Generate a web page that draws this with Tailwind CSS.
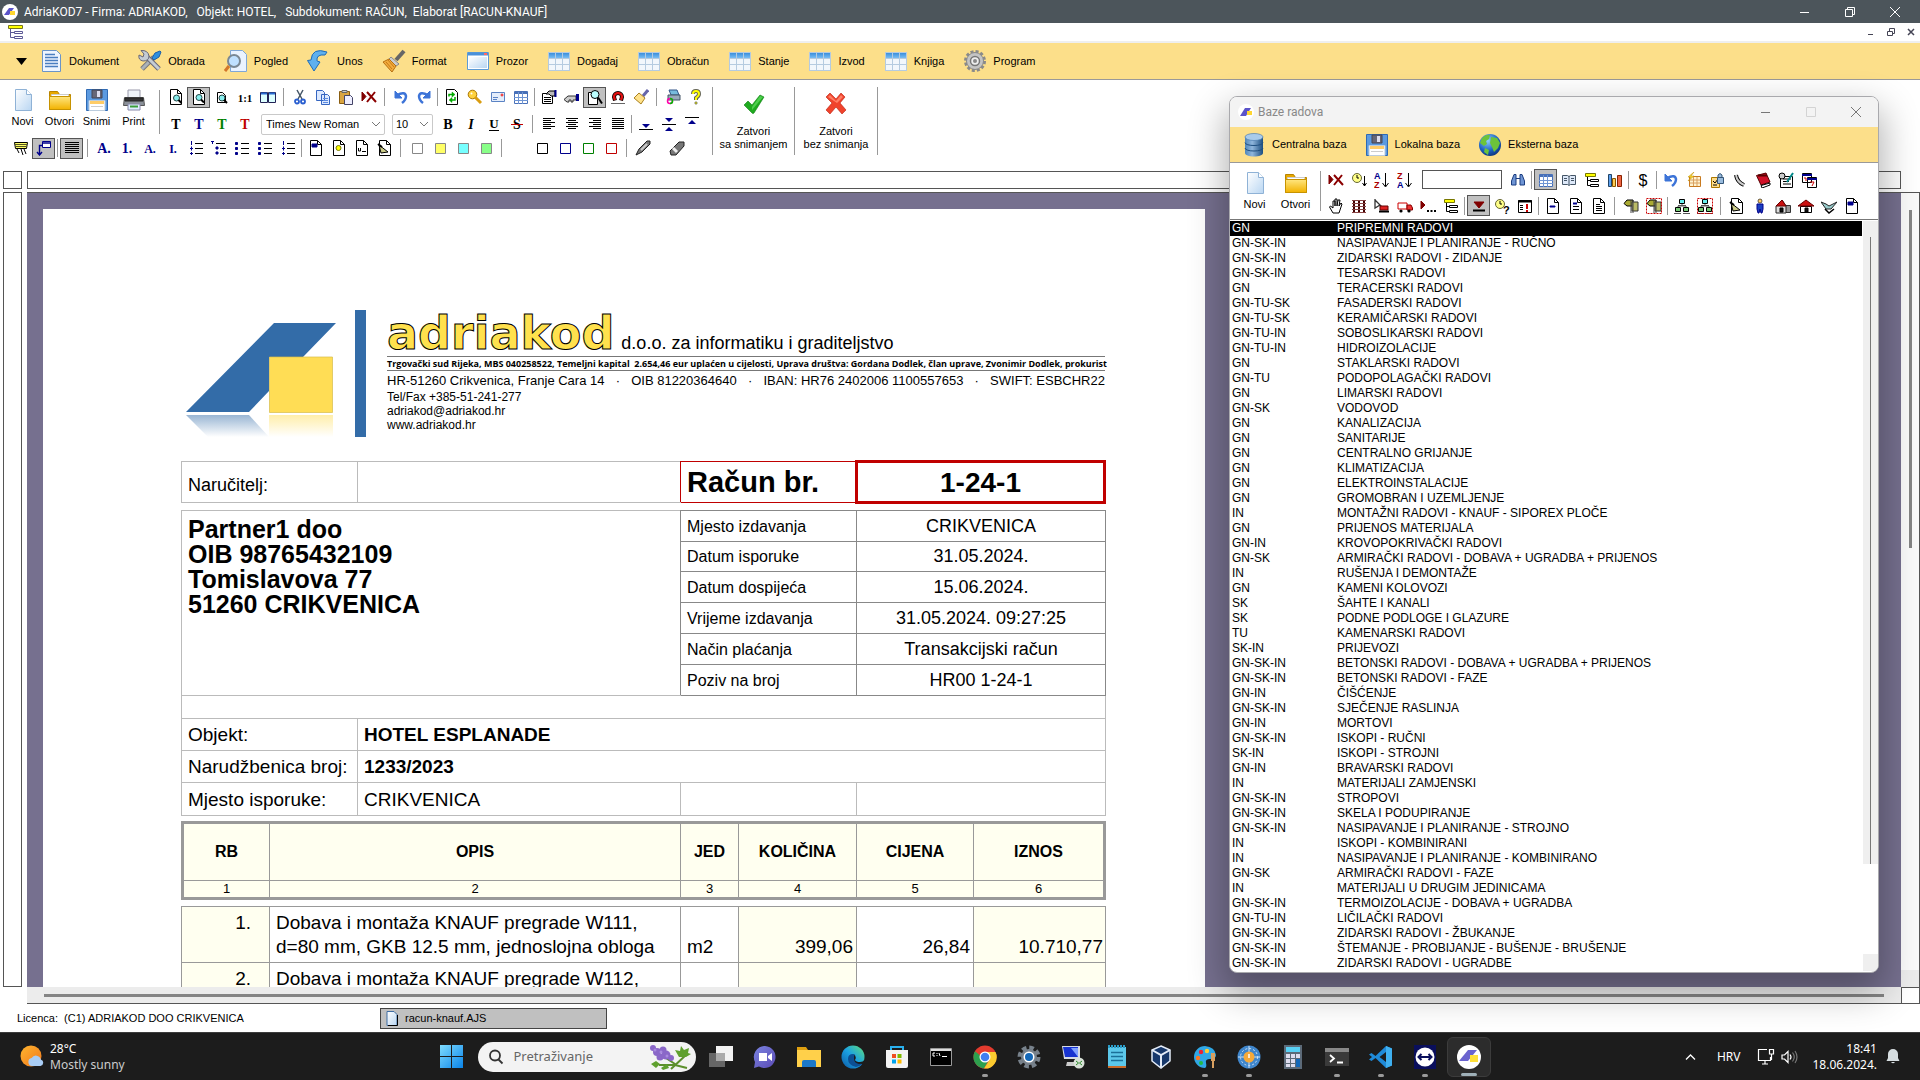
<!DOCTYPE html>
<html lang="hr">
<head>
<meta charset="utf-8">
<title>AdriaKOD7</title>
<script src="https://cdn.jsdelivr.net/npm/@tailwindcss/browser@4"></script>
</head>
<body class="h-screen overflow-hidden bg-white text-black font-['Liberation_Sans',Arial,sans-serif] text-[11px] leading-[13px]">

<svg class="absolute size-0" aria-hidden="true">
  <linearGradient id="gBlue" x1="0" y1="0" x2="1" y2="1"><stop offset="0" stop-color="#fff"/><stop offset="1" stop-color="#b9d6f2"/></linearGradient>
  <linearGradient id="gFolder" x1="0" y1="0" x2="0" y2="1"><stop offset="0" stop-color="#ffe680"/><stop offset="1" stop-color="#f2b200"/></linearGradient>
  <linearGradient id="gHead" x1="0" y1="0" x2="0" y2="1"><stop offset="0" stop-color="#3c8fdc"/><stop offset="1" stop-color="#79bdf2"/></linearGradient>
  <linearGradient id="gDb" x1="0" y1="0" x2="1" y2="0"><stop offset="0" stop-color="#4f86ba"/><stop offset=".4" stop-color="#8fb6dc"/><stop offset="1" stop-color="#1c4e80"/></linearGradient>
  <radialGradient id="gGlobe" cx=".4" cy=".3" r=".8"><stop offset="0" stop-color="#8fd0ff"/><stop offset=".6" stop-color="#1b5fbf"/><stop offset="1" stop-color="#0a2a6b"/></radialGradient>
  <linearGradient id="gRefB" x1="0" y1="0" x2="0" y2="1"><stop offset="0" stop-color="#336ca8" stop-opacity=".5"/><stop offset="1" stop-color="#336ca8" stop-opacity="0"/></linearGradient>
  <linearGradient id="gRefY" x1="0" y1="0" x2="0" y2="1"><stop offset="0" stop-color="#ffdd55" stop-opacity=".5"/><stop offset="1" stop-color="#ffdd55" stop-opacity="0"/></linearGradient>
  <linearGradient id="gWin" x1="0" y1="0" x2="1" y2="1"><stop offset="0" stop-color="#7fdcff"/><stop offset="1" stop-color="#0a84e8"/></linearGradient>
  <linearGradient id="gEdge" x1="0" y1="1" x2="1" y2="0"><stop offset="0" stop-color="#0c59a4"/><stop offset=".5" stop-color="#1ba1e2"/><stop offset="1" stop-color="#5fe07a"/></linearGradient>
  <linearGradient id="gChat" x1="0" y1="0" x2="1" y2="1"><stop offset="0" stop-color="#7a83e0"/><stop offset="1" stop-color="#5b4bb5"/></linearGradient>
  <linearGradient id="gSun" x1="0" y1="0" x2="1" y2="1"><stop offset="0" stop-color="#ffb52e"/><stop offset="1" stop-color="#f0781e"/></linearGradient>
</svg>

<div class="flex h-full flex-col">

  <!-- Window title -->
  <header class="flex h-[23px] shrink-0 items-center bg-[#4c555b] pl-[2px] pr-[3px] font-[Roboto,'Noto_Sans',sans-serif] text-xs text-white">
    <svg class="mr-[6px] size-4" viewBox="0 0 16 16"><circle cx="8" cy="8" r="8" fill="#fff"/><path d="M2 11 7 4h5L7 11z" fill="#5b53c9"/><path d="M8 7h5v4H8z" fill="#ffd630"/></svg>
    <h1 class="grow whitespace-pre">AdriaKOD7 - Firma: ADRIAKOD,   Objekt: HOTEL,   Subdokument: RAČUN,  Elaborat [RACUN-KNAUF]</h1>
    <div class="flex items-center" data-wins></div>
  </header>
  <div class="flex h-5 shrink-0 items-center justify-between border-b-2 border-[#efefef] bg-white pl-2 pr-px">
    <svg class="h-4 w-4" viewBox="0 0 16 16" fill="none" stroke="#5d5a96"><path d="M.5 1.500h14v3H.5z" fill="#ff0" stroke="#77761c"/><path d="M2.500 5v8.500h4M2.500 8.500h4M6.500 7.500h8v2h-8zM6.500 12.500h8v2h-8z"/></svg>
    <div class="flex items-center gap-1 text-[#445]">
      <button aria-label="Smanji" class="size-4"><svg viewBox="0 0 16 16" fill="none" stroke="currentColor"><path d="M5 10.500h5"/></svg></button>
      <button aria-label="Vrati" class="size-4"><svg viewBox="0 0 16 16" fill="none" stroke="currentColor"><path d="M4.500 7.500h5v4h-5zM6.500 7V4.500h5v5H10"/></svg></button>
      <button aria-label="Zatvori" class="size-4"><svg viewBox="0 0 16 16" fill="none" stroke="currentColor" stroke-width="1.500"><path d="m5 5 6 6m0-6-6 6"/></svg></button>
    </div>
  </div>

  <!-- Main menu -->
  <nav class="flex h-[37px] shrink-0 items-center border-b border-[#999] bg-[#fcdf8a] pl-4">
    <button aria-label="Izbornik" class="mr-3"><svg class="h-[7px] w-[11px]" viewBox="0 0 11 7"><path d="M0 0h11L5.500 7z"/></svg></button>
    <div class="flex gap-[19px]" data-menu="page:Dokument tools:Obrada search:Pogled arrow:Unos brush:Format window:Prozor grid:Događaj grid:Obračun grid:Stanje grid:Izvod grid:Knjiga gear:Program"></div>
  </nav>

  <!-- Toolbars -->
  <section class="flex h-[91px] shrink-0 pt-[7px]">
    <div class="shrink-0">
      <div class="flex pl-1">
        <div class="flex pt-px" data-big="page2:Novi folder:Otvori floppy:Snimi printer:Print"></div>
        <div class="ml-[7px] mr-1 h-11 w-px self-center bg-[#999]"></div>
        <div>
          <div class="flex h-5 items-center" data-bar="zoomDoc *zoomDoc2 zoomDoc3 oneone panes |4 cut copy paste del |4 undo redo |2 refresh key mail cells |2 props hand *magDoc magnet broom |4 printc help"></div>
          <div class="mt-1 flex h-[26px] items-center">
            <div class="flex" data-bar="T#000 T#00008b T#008000 T#c00000"></div>
            <span class="relative ml-[5px] flex">
              <select aria-label="Font" class="h-[21px] w-[124px] appearance-none rounded-xs border border-[#c9c9c9] bg-white pl-1 text-[11px]"><option>Times New Roman</option></select>
              <svg class="pointer-events-none absolute right-1 top-[7px] h-[6px] w-[10px]" viewBox="0 0 10 6" fill="none" stroke="#777"><path d="m1 1 4 4 4-4"/></svg>
            </span>
            <span class="relative ml-[7px] mr-[3px] flex">
              <select aria-label="Veličina" class="h-[21px] w-[41px] appearance-none rounded-xs border border-[#c9c9c9] bg-white pl-[3px] text-[11px]"><option>10</option></select>
              <svg class="pointer-events-none absolute right-1 top-[7px] h-[6px] w-[10px]" viewBox="0 0 10 6" fill="none" stroke="#777"><path d="m1 1 4 4 4-4"/></svg>
            </span>
            <div class="flex items-center" data-bar="bold italic underl strike |4 alL alC alR alJ |2 vB vM vT"></div>
          </div>
        </div>
      </div>
      <div class="mt-px flex h-5 items-center pl-[9px]" data-bar="sheet *frame |2 *justify |4 nA n1 na nI num multi bul bul num |2 docB docS docT docP |4 sq#888#fff sq#888#ff6 sq#888#7ff sq#888#8f8 |4 _24 sq#000#fff sq#00008b#fff sq#008000#fff sq#c00000#fff |4 pen _11 pen2"></div>
    </div>
    <div class="ml-[5px] flex h-[68px] items-stretch divide-x divide-[#999] border-x border-[#999]">
      <button class="flex w-[82px] flex-col items-center pt-1 text-center"><svg class="mb-[10px] size-6" viewBox="0 0 24 24"><path d="m2 14 4-4 4 4 8-10 4 2-10 16q-1 1-2 0z" fill="#1faa1f" stroke="#0f7d12" stroke-width=".6"/><path d="m10 16 8-11 3 1-11 13z" fill="#4fcf4f"/></svg>Zatvori<br>sa snimanjem</button>
      <button class="flex w-[82px] flex-col items-center pt-1 text-center"><svg class="mb-[10px] size-6" viewBox="0 0 24 24"><path d="m2 6 4-4 6 6 5-6 4 4-5 6 6 7-4 4-6-7-6 7-4-4 6-7z" fill="#f0432c" stroke="#b8200f" stroke-width=".6"/><path d="m4 6 2-2 6 6 5-6 2 2-6 6z" fill="#ff7f66"/></svg>Zatvori<br>bez snimanja</button>
    </div>
  </section>

  <!-- Horizontal ruler -->
  <div class="flex h-[18px] shrink-0 gap-[5px] pl-[3px] pr-[19px]">
    <div class="w-[19px] border border-[#555]"></div>
    <div class="grow border border-[#555]"></div>
  </div>

  <!-- Work area -->
  <main class="mt-[3px] flex min-h-0 grow gap-[5px] pl-[3px]">
    <div class="mb-[17px] w-[19px] border border-[#555]"></div>
    <div class="flex min-w-0 grow flex-col border-y border-r border-[#555]">
      <div class="flex min-h-0 grow">
        <div class="min-w-0 grow overflow-hidden bg-[#76708f] pl-4 pt-4">
          <article class="h-full w-[1162px] bg-white pl-[138px] pt-[101px]">
            <div class="w-[925px]">
              <!-- Letterhead -->
              <header class="flex h-[150px] pl-[5px]">
                <svg class="h-[130px] w-[181px] shrink-0" viewBox="0 0 181 130">
                  <path d="M0 102 88 13h62l-33 34H83v34l-20 21z" fill="#336ca8"/>
                  <path d="M83.500 47h63v55.500h-63z" fill="#ffdd55" stroke="#d6bb4c" stroke-width=".7"/>
                  <path d="M0 105h63l20 22H22z" fill="url(#gRefB)"/><path d="M83 105h64v22H83z" fill="url(#gRefY)"/>
                  <path d="M169 0h11v127h-11z" fill="#336ca8"/>
                </svg>
                <div class="ml-5 w-[718px] pt-px">
                  <div class="flex h-[45px] items-baseline justify-start gap-[7px]">
                    <strong class="font-['DejaVu_Sans',sans-serif] text-[46px] font-bold leading-[45px] text-[#ffe14d] [-webkit-text-stroke:1px_#000]">adriakod</strong>
                    <span class="whitespace-nowrap text-[18px]">d.o.o. za informatiku i graditeljstvo</span>
                  </div>
                  <p class="h-[15px] whitespace-nowrap border-y border-[#777] font-['Open_Sans',sans-serif] text-[9px] font-bold leading-[13px]">Trgovački sud Rijeka, MBS 040258522, Temeljni kapital&nbsp; 2.654,46 eur uplaćen u cijelosti, Uprava društva: Gordana Dodlek, član uprave, Zvonimir Dodlek, prokurist</p>
                  <p class="flex justify-between whitespace-nowrap text-[13px] leading-[19px]"><span>HR-51260 Crikvenica, Franje Cara 14</span><span>·</span><span>OIB 81220364640</span><span>·</span><span>IBAN: HR76 2402006 1100557653</span><span>·</span><span>SWIFT: ESBCHR22</span></p>
                  <address class="text-xs leading-[14px] not-italic">Tel/Fax +385-51-241-277<br>adriakod@adriakod.hr<br>www.adriakod.hr</address>
                </div>
              </header>

              <table class="w-full table-fixed border-collapse border border-[#bbb] text-[19px]">
                <colgroup><col class="w-[176px]"><col><col class="w-[176px]"><col class="w-[248px]"></colgroup>
                <tr class="h-[41px]">
                  <td class="border border-[#bbb] pl-[6px] pt-[6px] text-[18px]">Naručitelj:</td><td class="border border-[#bbb] border-r-[#c00000]"></td>
                  <th class="border border-[#c00000] pl-[6px] text-left text-[29px]">Račun br.</th>
                  <th class="border-3 border-[#c00000] text-[28px]">1-24-1</th>
                </tr>
              </table>

              <table class="mt-[6px] w-full table-fixed border-collapse border border-[#bbb] text-[19px]">
                <colgroup><col class="w-[176px]"><col><col class="w-[176px]"><col class="w-[249px]"></colgroup>
                <tr class="h-[31px]">
                  <td colspan="2" rowspan="6" class="border border-[#bbb] border-r-[#888] pl-[6px] pt-[6px] align-top text-[25px] font-bold leading-[25px]">Partner1 doo<br>OIB 98765432109<br>Tomislavova 77<br>51260 CRIKVENICA</td>
                  <td class="border border-[#888] pl-[6px] text-[16px]">Mjesto izdavanja</td><td class="border border-[#888] text-center text-[18px]">CRIKVENICA</td>
                </tr>
                <tr class="h-[30px]"><td class="border border-[#888] pl-[6px] text-[16px]">Datum isporuke</td><td class="border border-[#888] text-center text-[18px]">31.05.2024.</td></tr>
                <tr class="h-[31px]"><td class="border border-[#888] pl-[6px] text-[16px]">Datum dospijeća</td><td class="border border-[#888] text-center text-[18px]">15.06.2024.</td></tr>
                <tr class="h-[31px]"><td class="border border-[#888] pl-[6px] text-[16px]">Vrijeme izdavanja</td><td class="border border-[#888] text-center text-[18px]">31.05.2024. 09:27:25</td></tr>
                <tr class="h-[31px]"><td class="border border-[#888] pl-[6px] text-[16px]">Način plaćanja</td><td class="border border-[#888] text-center text-[18px]">Transakcijski račun</td></tr>
                <tr class="h-[31px]"><td class="border border-[#888] pl-[6px] text-[16px]">Poziv na broj</td><td class="border border-[#888] text-center text-[18px]">HR00 1-24-1</td></tr>
                <tr class="h-[23px]"><td colspan="4" class="border border-[#bbb]"></td></tr>
                <tr class="h-8"><td class="border border-[#bbb] pl-[6px]">Objekt:</td><th colspan="3" class="border border-[#bbb] pl-[6px] text-left">HOTEL ESPLANADE</th></tr>
                <tr class="h-8"><td class="whitespace-nowrap border border-[#bbb] pl-[6px]">Narudžbenica broj:</td><th colspan="3" class="border border-[#bbb] pl-[6px] text-left">1233/2023</th></tr>
                <tr class="h-[33px]"><td class="border border-[#bbb] pl-[6px]">Mjesto isporuke:</td><td class="border border-[#bbb] pl-[6px]">CRIKVENICA</td><td class="border border-[#bbb]"></td><td class="border border-[#bbb]"></td></tr>
              </table>

              <table class="mt-[5px] w-full table-fixed border-collapse border-3 border-[#999] bg-[#fffff0] text-[16px]">
                <colgroup><col class="w-[87px]"><col><col class="w-[58px]"><col class="w-[118px]"><col class="w-[117px]"><col class="w-[131px]"></colgroup>
                <tr class="h-[58px]"><th class="border border-[#999] pb-[2px]">RB</th><th class="border border-[#999] pb-[2px]">OPIS</th><th class="border border-[#999] pb-[2px]">JED</th><th class="border border-[#999] pb-[2px]">KOLIČINA</th><th class="border border-[#999] pb-[2px]">CIJENA</th><th class="border border-[#999] pb-[2px]">IZNOS</th></tr>
                <tr class="h-[18px] text-center text-[13px] leading-4"><td class="border border-[#999]">1</td><td class="border border-[#999]">2</td><td class="border border-[#999]">3</td><td class="border border-[#999]">4</td><td class="border border-[#999]">5</td><td class="border border-[#999]">6</td></tr>
              </table>

              <table class="mt-[6px] w-full table-fixed border-collapse border border-[#999] text-[19px] leading-6">
                <colgroup><col class="w-[88px]"><col><col class="w-[58px]"><col class="w-[118px]"><col class="w-[117px]"><col class="w-[132px]"></colgroup>
                <tr class="h-14 align-bottom">
                  <td class="border border-[#999] bg-[#fffff0] pr-[18px] pt-1 text-right align-top">1.</td>
                  <td class="whitespace-nowrap border border-[#999] pb-[3px] pl-[6px]">Dobava i montaža KNAUF pregrade W111,<br>d=80 mm, GKB 12.5 mm, jednoslojna obloga</td>
                  <td class="border border-[#999] pb-[3px] pl-[6px]">m2</td>
                  <td class="border border-[#999] bg-[#fffff0] pb-[3px] pr-[3px] text-right">399,06</td>
                  <td class="border border-[#999] pb-[3px] pr-[3px] text-right">26,84</td>
                  <td class="border border-[#999] bg-[#fffff0] pb-[3px] pr-[2px] text-right">10.710,77</td>
                </tr>
                <tr class="h-14 align-top">
                  <td class="border border-[#999] bg-[#fffff0] pr-[18px] pt-1 text-right">2.</td>
                  <td class="border border-[#999] pl-[6px] pt-1">Dobava i montaža KNAUF pregrade W112,</td>
                  <td class="border border-[#999]"></td><td class="border border-[#999] bg-[#fffff0]"></td><td class="border border-[#999]"></td><td class="border border-[#999] bg-[#fffff0]"></td>
                </tr>
              </table>
            </div>
          </article>
        </div>
        <div class="flex w-[18px] shrink-0 flex-col items-center bg-[#fafafa]">
          <div class="mt-[17px] h-[338px] w-[3px] bg-[#858585]"></div>
          <div class="mt-auto h-[17px] w-full bg-[#ececec]"></div>
        </div>
      </div>
      <div class="flex h-4 shrink-0">
        <div class="flex grow items-center bg-[#ececec] pl-[17px] pr-[17px]"><div class="h-[3px] grow bg-[#858585]"></div></div>
        <div class="w-[18px] border-l border-t border-[#555] bg-white"></div>
      </div>
    </div>
  </main>

  <!-- Status line -->
  <footer class="flex h-[28px] shrink-0 items-center pl-[17px]">
    <p class="w-[363px]">Licenca:&nbsp; (C1) ADRIAKOD DOO CRIKVENICA</p>
    <button class="flex h-[21px] w-[227px] items-center gap-[7px] border border-[#444] bg-[#c0c0c0] pl-[5px]"><svg class="h-[15px] w-3" viewBox="0 0 12 15"><path d="M1 .5h7l3 3v11H1z" fill="url(#gBlue)" stroke="#3f6ea5"/><path d="M11.500 4v10.500H2" fill="none" stroke="#000"/></svg>racun-knauf.AJS</button>
  </footer>

  <!-- System taskbar -->
  <footer class="grid h-12 shrink-0 grid-cols-[1fr_auto_1fr] items-center border-t border-[#3c3c3c] bg-[#1c1c1c] font-['Noto_Sans','Open_Sans',sans-serif] text-xs text-white">
    <div class="flex items-center gap-[6px] pl-5">
      <svg class="size-6" viewBox="0 0 24 24"><circle cx="11" cy="11" r="10.500" fill="url(#gSun)"/><path d="M12 21a4 4 0 0 1-.4-7.900 5 5 0 0 1 9.200 1.300A3.400 3.400 0 0 1 20.500 21z" fill="#a9cdf5"/></svg>
      <p class="leading-4">28°C<br><span class="text-[#ccc]">Mostly sunny</span></p>
    </div>
    <div class="flex items-center">
      <button aria-label="Start" class="flex w-11 justify-center"><svg class="size-[23px]" viewBox="0 0 23 23"><path d="M0 0h11v11H0zM12 0h11v11H12zM0 12h11v11H0zM12 12h11v11H12z" fill="url(#gWin)"/></svg></button>
      <div class="ml-1 mr-[3px] flex h-[30px] w-[218px] items-center rounded-full bg-[#f3f3f3] pl-[10px]">
        <svg class="size-4" viewBox="0 0 16 16" fill="none" stroke="#333" stroke-width="1.800"><circle cx="7" cy="6.500" r="5"/><path d="m10.500 10.500 4 4"/></svg>
        <input type="text" aria-label="Pretraživanje" placeholder="Pretraživanje" class="ml-[10px] w-0 grow bg-transparent text-[13px] outline-none placeholder:text-[#666]">
        <svg class="mr-[5px] h-[26px] w-[42px]" viewBox="0 0 42 26"><path d="m14 12 12 8M22 25l16-15M10 21h16l12 3" stroke="#5c8f2c" stroke-width="2" fill="none"/><g fill="#8a67c8"><circle cx="4" cy="4" r="3"/><circle cx="8" cy="8" r="4"/><circle cx="14" cy="6" r="3.500"/><circle cx="11" cy="13" r="3.500"/><circle cx="17" cy="11" r="4.500"/><circle cx="22" cy="14" r="3"/></g><g fill="#a98ae0"><circle cx="6" cy="6" r="1.500"/><circle cx="12" cy="8" r="1.500"/><circle cx="18" cy="12" r="1.500"/></g><path d="m26 6 5 1 1-5 3 4 5-2-1 5 3 1-5 3-7 0zM2 20l5-3 4 3-4 4zM12 24l6-4 2 4-6 2z" fill="#5fa02e"/></svg>
      </div>
      <div class="flex" data-tasks></div>
    </div>
    <div class="flex items-center justify-end pr-5">
      <svg class="h-[6px] w-[11px]" viewBox="0 0 11 6" fill="none" stroke="#fff" stroke-width="1.300"><path d="m1 5.500 4.500-4.500L10 5.500"/></svg>
      <span class="ml-[21px]">HRV</span>
      <svg class="ml-[17px] h-[17px] w-[18px]" viewBox="0 0 18 17" fill="none" stroke="#fff" stroke-width="1.200"><path d="M10 1.500H1.500v11h12V9M5 16h6M8 13v3M12.500 1.500h4V6h-4zM14.500 6v6"/></svg>
      <svg class="ml-[6px] h-[14px] w-[17px]" viewBox="0 0 17 14" fill="none" stroke="#fff" stroke-width="1.200"><path d="M1 5v4h2.500L7 12.500v-11L3.500 5zM9 4.500q2 2.500 0 5"/><path d="M11.500 2.500q3.500 4.500 0 9M14 1q4 6 0 12" stroke="#777"/></svg>
      <p class="ml-[14px] text-right leading-4">18:41<br>18.06.2024.</p>
      <svg class="ml-[9px] h-[15px] w-[14px]" viewBox="0 0 14 15" fill="#d6dde0"><path d="M7 0a5 5 0 0 0-5 5v4l-1.500 3h13L12 9V5a5 5 0 0 0-5-5zM5 13h4q-2 2.500-4 0z"/></svg>
    </div>
  </footer>
</div>

<!-- Floating window -->
<section class="absolute right-[41px] top-24 flex w-[650px] flex-col overflow-hidden rounded-lg border border-[#a9a9ad] bg-white shadow-[0_16px_36px_4px_rgba(0,0,0,0.3)]">
  <header class="flex h-[30px] items-center bg-[#f3f3f3] pl-2 font-[Roboto,'Noto_Sans',sans-serif] text-xs text-[#888]">
    <svg class="mr-1 size-4" viewBox="0 0 16 16"><circle cx="8" cy="8" r="8" fill="#fff"/><path d="M2 12 7 4h6L8 12z" fill="#5b53c9"/><path d="M9 7h5v4H9z" fill="#ffd630"/></svg>
    <h2 class="grow">Baze radova</h2>
    <div class="flex items-center text-[#777]" data-wins></div>
  </header>
  <nav class="flex h-9 items-center gap-[18px] border-b border-[#999] bg-[#fcdf8a] pl-3" data-menu="db:Centralna_baza floppy:Lokalna_baza globe:Eksterna_baza"></nav>
  <div class="flex h-[57px] border-b border-[#777] pl-1">
    <div class="flex pt-2 [&>button]:w-[41px]" data-big="page2:Novi folder:Otvori"></div>
    <div class="ml-1 mr-[3px] h-10 w-px self-center bg-[#999]"></div>
    <div class="pt-[5px]">
      <div class="flex h-[23px] items-center">
        <div class="flex items-center" data-bar="del clockS az za"></div>
        <input type="text" aria-label="Traži" class="ml-[6px] mr-1 h-[19px] w-20 border border-[#555] bg-white px-1">
        <div class="flex items-center" data-bar="binoc |2 *cells book tree chart |2 dollar |2 undo calY lock phone noteR calE calZ"></div>
      </div>
      <div class="mt-[3px] flex h-[23px] items-center" data-bar="palm crew digger truck dots tree |2 *downR clockQ alert |2 docC docM docL |4 sign signR |2 net netR |4 docP man house home shake docB"></div>
    </div>
  </div>
  <div class="flex pb-px pt-px">
    <div class="min-w-0 grow">
      <table class="w-full table-fixed text-left text-xs leading-[15px]">
        <colgroup><col class="w-[104px]"><col></colgroup>
        <tbody data-works></tbody>
      </table>
    </div>
    <div class="ml-px flex w-[15px] shrink-0 flex-col justify-between">
      <div class="flex h-[643px] justify-center bg-[#efefef] pt-4"><div class="w-px bg-[#777]"></div></div>
      <div class="h-[17px] bg-[#efefef]"></div>
    </div>
  </div>
</section>

<script>
const p = (d, f = 'none', s = '#000', w = 1) => `<path d="${d}" fill="${f}" stroke="${s}" stroke-width="${w}"/>`;
const tx = (t, f = '#000', a = '') => `<text x="8" y="13" text-anchor="middle" font-family="Liberation Serif" font-weight="bold" font-size="14" fill="${f}" ${a}>${t}</text>`;
const doc = p('M2.500 .5h7l4 4v11h-11z', '#fff') + p('M9.500 .5v4h4');
const lens = (x, y) => `<circle cx="${x}" cy="${y}" r="3" fill="#8ee" stroke="#244"/>` + p(`M${x + 2} ${y + 2}l3 3`, 'none', '#000', 2);
const lines = a => p(a.map((r, i) => `M${r[0]} ${2.5 + i * 2}h${r[1]}`).join(''));
const treeI = p('M1.500 1.500h10v3h-10z', '#ff0', '#770') + p('M3.500 5v8.500h3M3.500 8.500h3M6.500 7.500h8v2h-8zM6.500 12.500h8v2h-8z');
const listI = c => p('M7 3.500h8M7 8.500h8M7 13.500h8') + c;
const pcs = p('M5.500 1.500h5v4h-5z', '#6ee') + p('M1.500 9.500h5v4h-5zM9.500 9.500h5v4h-5z', '#7c7') + p('M8 6v2M4 9V8h8v1M0 15.500h7M9 15.500h7M4 7.500h8', 'none', '#555');
const signI = p('M1 5.500 4 2h6v6H4z', '#aa3') + p('M9 4h6v9H9z', '#bb6', '#333') + p('M8 2v13M10 2v13', 'none', '#444');
const I = {
  zoomDoc: doc + lens(8.5, 9), zoomDoc2: doc + lens(8, 8.5), zoomDoc3: p('M3.500 3.500h5l3 3v7h-8z', '#fff') + lens(8, 9),
  oneone: tx('1:1', '#000', 'style="font-size:11px"'),
  panes: p('M.5 3.500h7v10h-7zM8.500 3.500h7v10h-7z', '#dff', '#225') + p('M1 4.500h6M9 4.500h6', 'none', '#2a6ad0', 2),
  cut: p('m5 1 5 9M11 1 6 10', 'none', '#456', 1.5) + '<g fill="none" stroke="#2a5fd0" stroke-width="1.800"><circle cx="5" cy="12.500" r="2"/><circle cx="11" cy="12.500" r="2"/></g>',
  copy: p('M1.500 1.500h6l2 2v8h-8zM6.500 5.500h6l2 2v8h-8z', '#dce9ff', '#3565c0') + p('M8 9.500h5M8 11.500h5M8 13.500h5', 'none', '#5c8ae0'),
  paste: p('M1.500 2.500h10v12h-10z', '#d9a441', '#8a5d10') + p('M4 1.500h5v2H4z', '#ccc', '#666') + p('M6.500 6.500h6l2 2v7h-8z', '#eef', '#446'),
  del: p('M1 3v9l4-4.500z', '#800000', '#800000') + p('m6 3 9 10M14 3 6 13', 'none', '#8b0000', 2),
  undo: p('M4 6q8-4 9 1 0 4-4 7', 'none', '#3d74d8', 2.5) + p('M2 2v7h7z', '#3d74d8', '#3d74d8'),
  redo: p('M12 6Q4 2 3 7q0 4 4 7', 'none', '#3d74d8', 2.5) + p('M14 2v7H7z', '#3d74d8', '#3d74d8'),
  refresh: p('M2.500 .5h8l3 3v12h-11z', '#fff') + p('M5 7.500V5.500h3M11 8v3H8', 'none', '#0a0', 1.5) + p('m8 3 3 2.500L8 8zM8 8.500 5 11l3 2.500z', '#0a0', '#0a0', .5),
  key: '<circle cx="5.500" cy="5.500" r="4.300" fill="#ffd23c" stroke="#a87400"/><circle cx="4.500" cy="4.500" r="1" fill="#fff"/>' + p('m8 8 6 6M11 13l2-2', 'none', '#d99c10', 3),
  mail: p('M1.500 3.500h13v9h-13z', '#e4edfb', '#5b83c4') + p('M3 8.500h5M3 10.500h4', 'none', '#5b83c4') + p('M11 5h2v2h-2z', '#f66', '#d22', .5),
  cells: p('M1.500 2.500h13v12h-13z', '#fff', '#4870b8') + p('M1 4h14', 'none', '#4870b8', 2) + p('M1 8.500h14M1 11.500h14M5.500 3v12M9.500 3v12', 'none', '#6f95d4'),
  props: p('M1.500 4.500h10v10h-10z', '#fff') + p('M3 8.500h7M3 10.500h7M3 12.500h7') + p('M5 5 8 2h6v5h-4L8 5z', '#bbb') + p('M14.500 1v7', 'none', '#00008b', 2),
  hand: p('M0 10.500 4 7h8v4H9v2H7v-2H5v2H3z', '#ccc', '#333') + p('M13.500 5v7', 'none', '#00008b', 3),
  magDoc: p('M1.500 3.500h9v12h-9z', '#fff') + '<circle cx="8" cy="5.500" r="4" fill="#bff" stroke="#000"/>' + p('m11 8.500 4 6', 'none', '#000', 2),
  magnet: p('M5 11.500 4 8a4 4 0 1 1 8 0l-1 3.500', 'none', '#000', 4) + p('M5 11 4 8a4 4 0 1 1 8 0l-1 3', 'none', '#e01010', 2.4) + p('M1 14.500h14', 'none', '#666'),
  broom: p('m15 1-5 6', 'none', '#66a', 3) + p('m6 4 6 5-4 6-7-6z', '#ffe28a', '#a98020'),
  printc: p('M4 1h8l2 5H6z', '#7bd', '#358') + p('M3 6h12v5H3z', '#9ab', '#456') + '<circle cx="5" cy="12" r="2.500" fill="none" stroke="#f0a" stroke-width="1.500"/><path d="M5 9.500a2.500 2.500 0 0 1 0 5" fill="none" stroke="#0b0" stroke-width="1.500"/>',
  help: p('M5 5q0-3 3-3t3 3q0 2-3 4v2', 'none', '#665', 4) + p('M5 5q0-3 3-3t3 3q0 2-3 4v2', 'none', '#ff0', 2) + p('M7 13h2v2H7z', '#ff0', '#665', .7),
  bold: tx('B'), italic: tx('I', '#000', 'font-style="italic"'),
  underl: `<text x="8" y="12" text-anchor="middle" font-family="Liberation Serif" font-weight="bold" font-size="13">U</text>` + p('M3 14.500h10'),
  strike: tx('S') + p('M2 8.500h12', 'none', '#c00000'),
  alL: lines([[2, 12], [2, 8], [2, 12], [2, 8], [2, 12], [2, 8]]), alC: lines([[2, 12], [4, 8], [2, 12], [4, 8], [2, 12], [4, 8]]),
  alR: lines([[2, 12], [6, 8], [2, 12], [6, 8], [2, 12], [6, 8]]), alJ: lines([[2, 12], [2, 12], [2, 12], [2, 12], [2, 12], [2, 12]]),
  justify: lines([[1, 14], [1, 14], [1, 14], [1, 14], [1, 14], [1, 14]]),
  vB: p('M1 13.500h14') + p('M4 8h8l-4 4z', '#00008b', 'none'), vM: p('M1 8.500h14') + p('M4 2h8L8 6zM4 15h8l-4-4z', '#00008b', 'none'), vT: p('M1 1.500h14') + p('M4 8h8L8 4z', '#00008b', 'none'),
  sheet: p('M1.500 2.500h13l-1 6h-11z', '#ff6') + p('M2 4.500h12M2 6.500h12', 'none', '#552') + p('m4 9 2 4M8 9l2 6M11 9l2 5'),
  frame: p('M6.500 1.500h8v6h-8z', '#fff', '#00008b') + p('M7 3h7M6 5.500H3.500V15M1 12l2.500 3L6 12', 'none', '#00008b', 1.4),
  nA: tx('A.', '#00008b'), n1: tx('1.', '#00008b'), na: tx('A.', '#00008b', 'style="font-size:12px"'), nI: tx('I.', '#00008b', 'style="font-size:12px"'),
  num: listI(p('M3.500 1v4M2 8.500h3M2 13.500h3M3.500 6.500v4M3.500 12v3', 'none', '#00008b')),
  multi: p('M1.500 1v3M0 1.500h3', 'none', '#00008b') + p('M5 3.500h9M9 8.500h6M9 13.500h6') + p('M5 7h2v2H5zM5 12h2v2H5z', '#00008b', '#00008b'),
  bul: listI(p('M1.500 2.500h2v2h-2zM1.500 7.500h2v2h-2zM1.500 12.500h2v2h-2z', '#00008b', '#00008b')),
  docB: doc + p('M4 4h5v3H4z', '#00008b', '#00008b'), docS: doc + '<circle cx="7.500" cy="8" r="2.500" fill="#ff0" stroke="#770"/>',
  docT: doc + p('M4.500 8v3h2V8M8 11.500h4'), docP: doc + p('m2 5 9 7-7 1z', '#cc8') + p('m1 4 4 3', 'none', '#000', 2),
  docC: doc + p('M5 8h5v1H5z', '#00008b', '#00008b'), docM: doc + p('M5 5.500h4', 'none', '#00008b', 2) + p('M5 8.500h6M5 11.500h6'), docL: doc + p('M5 6.500h4M5 8.500h6M5 10.500h6M5 12.500h6'),
  pen: p('m1 15 3-6 8-8h3v3l-8 8z', '#777', '#222') + p('m6 10 6-6', 'none', '#ccc', 2), pen2: p('m1 11 9-9h5v4l-8 9H2z', '#777', '#222') + p('M4 8l4 4', 'none', '#eee', 3),
  clockS: '<circle cx="6" cy="6" r="4.500" fill="#ff8" stroke="#663"/>' + p('M6 3v3h2M13.500 4v10m-2-3 2 3 2-3'),
  az: '<g font-family="Liberation Sans" font-weight="bold" font-size="9"><text x="0" y="7" fill="#00008b">A</text><text x="0" y="16" fill="#a00">Z</text></g>' + p('M11.500 1v13m-3-3 3 4 3-4'),
  za: '<g font-family="Liberation Sans" font-weight="bold" font-size="9"><text x="0" y="7" fill="#a00">Z</text><text x="0" y="16" fill="#00008b">A</text></g>' + p('M11.500 1v13m-3-3 3 4 3-4'),
  binoc: p('M1.500 9 4 2.500h2V13H1.500zM14.500 9 12 2.500h-2V13h4.500zM6 6.500h4', '#6f95d4', '#1b3d80'),
  book: p('M1.500 3.500h5l1.500 1 1.500-1h5v9h-5l-1.500 1-1.500-1h-5z', '#dde8f8', '#456') + p('M8 4v9M3 6.500h3M3 8.500h3M10 6.500h3M10 8.500h3', 'none', '#456'),
  tree: treeI, chart: p('M1.500 2.500h3v12h-3z', '#5aa0f0', '#246') + p('M5.500 6.500h3v8h-3z', '#fc5', '#850') + p('M10.500 3.500h4v11h-4z', '#e64', '#820'),
  dollar: `<text x="8" y="14" text-anchor="middle" font-family="Liberation Sans" font-size="16">$</text>`,
  calY: p('M3.500 4.500h11v10h-11z', '#fff3d0', '#c87a20') + p('M4 8h10M4 11h10M7.500 5v9M11 5v9', 'none', '#d9a060') + p('m8 0-6 5h3L2 9l6-5H5z', '#fd3', '#b80', .5),
  lock: p('M2.500 5.500h8v10h-8z', '#fd8', '#a70') + p('m4 9 2 2 3-4M4 13h4') + p('M9 5V3q2-3 4 0v2M8.500 5.500h6v6h-6z', '#9bd', '#357'),
  phone: p('M4 3q1 7 8 10', 'none', '#000', 4) + p('M4 3q1 7 8 10', 'none', '#ccc', 2), noteR: p('M1.500 3.500 11 1l4 9-9 3z', '#d01028', '#500') + p('M6 13.500 15 11v2l-8 3z', '#fff') + p('M3 3.500h9', 'none', '#500', 2),
  calE: p('M2.500 4.500h12v11h-12z', '#fff') + p('M5 7h8M5 9.500h6M5 12h8') + '<circle cx="4" cy="4" r="3" fill="#ccc" stroke="#000"/>' + p('m15 1-6 9', 'none', '#088', 2),
  calZ: p('M1.500 1.500h9v9h-9zM6.500 5.500h9v10h-9z', '#fff') + p('M1 3h10M6 7h10', 'none', '#00008b', 2) + p('M9 10h4l-2 4M3 6h2v3', 'none', '#c00'),
  palm: p('M5 15 1.500 9l1-1L5 10V3h2v5V1h2v7l1-6h2l-1 6 2-3 1 1-3 9z', '#fff'),
  crew: p('M3 2v12M8 2v12M13 2v12', 'none', '#400', 2) + p('M1 2.500h14M1 5.500h14M1 8.500h14M1 11.500h14M1 14.500h14', 'none', '#844'),
  digger: p('M1 1v9l5-3M1 2l7 7', 'none', '#333', 1.3) + p('M6 8h8v4H6z', '#d22', '#600') + p('M5 13.500h10', 'none', '#000', 2),
  truck: p('M1 5h9v6H1z', '#fff', '#c00') + p('M10 7h4l1.500 3v2H10z', '#e33', '#800') + '<g><circle cx="4" cy="13" r="1.600"/><circle cx="12" cy="13" r="1.600"/></g>',
  dots: p('M1 3v8l4-4z', '#800000', '#800000') + p('M7 13h2M10.500 13h2M14 13h2', 'none', '#000', 2),
  downR: p('M3 4h10l-5 6z', '#800000', '#800000') + p('M2 12.500h12', 'none', '#000', 2), clockQ: '<circle cx="6" cy="6" r="4.500" fill="#ff8" stroke="#663"/>' + p('M6 3v3h2') + '<text x="9" y="16" font-family="Liberation Sans" font-weight="bold" font-size="11">?</text>',
  alert: p('M1.500 2.500h13v12h-13z', '#fff') + p('M1 3.500h14', 'none', '#000', 2) + p('M3 7.500h3M3 9.500h3M3 11.500h3') + p('M10 6v5M10 12v2', 'none', '#c00', 2),
  sign: signI, signR: signI + '<path d="M.5.500h15v15H.5z" fill="none" stroke="#c00" stroke-dasharray="2 1"/>', net: pcs, netR: pcs + '<path d="M.5.500h15v15H.5z" fill="none" stroke="#c00" stroke-dasharray="2 1"/>',
  man: '<circle cx="8" cy="3" r="2" fill="#fc6" stroke="#000" stroke-width=".6"/>' + p('M5 6h6v5l-1 4H9l-1-4-1 4H6l-1-4z', '#1a3fc0', '#00008b'),
  house: p('M4.500 7.500h11v7h-11z', '#999', '#333') + p('m1 8 6-6 4 6v7H1z', '#ddd', '#222') + p('M1 8l6-6 4 6z', '#c11', '#600') + p('M5 10h3v4H5z', '#111'), home: p('M2.500 8.500h11v6h-11z', '#fff') + p('m0 8 8-6 8 6z', '#c11', '#600') + p('M7 10h3v4H7z', '#111'),
  shake: p('M0 4l5 7h5l6-7-4 2-4 2-3-2z', '#9cc', '#222') + p('m4 11 4 4 5-4', 'none', '#000', 1.5)
};
const icon = n => n[0] === 'T' ? tx('T', n.slice(1)) :
  n.startsWith('sq') ? (([, s, f]) => `<path d="M3.500 3.500h10v10h-10z" fill="#${f}" stroke="#${s}"/>`)(n.split('#')) : I[n];
const seps = { 2: 'mx-0.5 h-[18px] w-px bg-[#999]', 4: 'mx-1 h-[18px] w-px bg-[#999]' };
const gaps = { 24: 'w-6', 11: 'w-[11px]' };
document.querySelectorAll('[data-bar]').forEach(el => el.innerHTML = el.dataset.bar.split(' ').map(n => {
  if (n[0] === '|') return `<i class="${seps[n.slice(1)]}"></i>`;
  if (n[0] === '_') return `<i class="${gaps[n.slice(1)]}"></i>`;
  const on = n[0] === '*', k = on ? n.slice(1) : n;
  return `<button aria-label="${k}" class="${on ? 'flex h-[21px] w-[23px] items-center justify-center border border-[#555] bg-[#c0c0c0]' : 'flex h-[21px] w-[23px] items-center justify-center'}"><svg class="size-4" viewBox="0 0 16 16">${icon(k)}</svg></button>`;
}).join(''));

const G = {
  page: p('M3.500 1.500h14l4 4v17h-18z', '#eef5ff', '#6a94c8') + p('M6 5.500h10M6 8.500h13M6 11.500h13M6 14.500h13M6 17.500h13', 'none', '#4a7ec0', 1.5),
  page2: p('M4.500 1.500h11l5 5v16h-16z', 'url(#gBlue)', '#8fb2d6') + p('M15.500 1.500v5h5', '#fff', '#8fb2d6'),
  folder: p('M1.500 3.500h8l2 3h11v15h-21z', '#e8a800', '#b88400') + p('M3.500 6.500h17v4h-17z', '#fff', '#ccc') + p('M1.500 8.500h21v13h-21z', 'url(#gFolder)', '#c79300'),
  floppy: p('M1.500 1.500h21v21h-21z', '#5c9ae0', '#2f6ab4') + p('M7 2h10v8H7z', '#667', '#445') + p('M12 3h3v6h-3z', '#dde', 'none') + p('M4 12.500h16v10H4z', '#fff', '#bcd') + p('M5 14.500h14', 'none', '#fc6', 3) + p('M6 18.500h12', 'none', '#ccc'),
  printer: p('M6 2h12v8H6z', '#eef3f8', '#99a') + p('M2.500 9.500h19l1 8h-21z', '#8a9098', '#555') + p('M3 10h18v3H3z', '#333', '#222') + p('M6 16h12v6H6z', '#dfefff', '#88a') + p('M8 18.500h8', 'none', '#3a9d3a', 2),
  tools: p('M16 8 4 20', 'none', '#777', 5) + p('M16 8 4 20', 'none', '#aab2ba', 3) + p('m14 9 3-5 5-2 1 1-2 5-5 3z', '#2d8fe0', '#1c5fa8') + p('m8 7 13 13', 'none', '#667', 5) + p('m8 7 13 13', 'none', '#c4ccd4', 3) + p('M3 1.500 6 5 5 8 1 6q-1 5 4 6 6 0 6-5Q10 1 3 1.500z', '#c4ccd4', '#667'),
  search: p('M6.500 1.500h12l4 4v17h-16z', '#eaf3ff', '#7fa7d6') + '<circle cx="10" cy="12" r="6" fill="#bfe0ff" stroke="#7a8894" stroke-width="2"/>' + p('m5 17-4 5', 'none', '#d2762a', 3),
  arrow: p('M20 3Q5-2 4 11l-3.500.500L7 22l6-9-3-1q-1-7 8-6z', '#5fb0ee', '#1f6cb8'),
  brush: p('M22 2 14 11', 'none', '#666', 4) + p('m9 8 8 7-3 2-7-7z', '#ccc', '#888') + p('m7 10 7 7-4 6L1 13z', '#f2ab3c', '#b56f12') + p('m4 13 6 7M6 11l6 7', 'none', '#c67a18'),
  window: p('M1.500 3.500h21v17h-21z', '#fff', '#5d9bd6') + p('M2 5h20', 'none', '#4a90d9', 3) + p('M3 8h18v11H3z', 'url(#gBlue)', 'none') + p('M18 5h3', 'none', '#f66', 2),
  grid: '<path d="M1 3h22v19H1z" fill="#b5cbe0"/><path d="M2 4h6v5H2zM9 4h6v5H9zM16 4h6v5h-6z" fill="url(#gHead)"/><path d="M2 10h6v5H2zM9 10h6v5H9zM16 10h6v5h-6zM2 16h6v5H2zM9 16h6v5H9zM16 16h6v5h-6z" fill="#f2f7fc"/>',
  gear: '<circle cx="12" cy="12" r="9.500" fill="none" stroke="#8a8a8a" stroke-width="3" stroke-dasharray="3 2"/><circle cx="12" cy="12" r="8.500" fill="#c4c4c4" stroke="#888"/><circle cx="12" cy="12" r="4.500" fill="#eee" stroke="#777" stroke-width="1.500"/><circle cx="12" cy="12" r="2" fill="#888"/>',
  db: '<path d="M3 4v16c0 2 4 3.500 9 3.500s9-1.500 9-3.500V4z" fill="url(#gDb)"/><ellipse cx="12" cy="4" rx="9" ry="3.500" fill="#a9cbea" stroke="#4f80b0" stroke-width=".7"/><path d="M3 9.500c0 4 18 4 18 0M3 15c0 4 18 4 18 0" fill="none" stroke="#1f4f80"/>',
  globe: '<circle cx="12" cy="12" r="11" fill="url(#gGlobe)"/><path d="M4 5q4-4 8-3l-1 4-3 2 1 3-3 2-4-3zM13 4l6 1 3 5-2 5-4 4-2-5-2-4zM7 15l4 2-1 5-4-3z" fill="#6cc33a"/>'
};
const svg24 = (k, c) => `<svg class="${c}" viewBox="0 0 24 24">${G[k]}</svg>`;
document.querySelectorAll('[data-menu]').forEach(el => el.innerHTML = el.dataset.menu.split(' ').map(s => {
  const [k, t] = s.split(':'); return `<button class="flex items-center gap-[6px] whitespace-nowrap">${svg24(k, 'size-6')}${t.replace('_', ' ')}</button>`;
}).join(''));
document.querySelectorAll('[data-big]').forEach(el => el.innerHTML = el.dataset.big.split(' ').map(s => {
  const [k, t] = s.split(':'); return `<button class="flex w-[37px] flex-col items-center gap-[3px]">${svg24(k, 'size-6')}${t}</button>`;
}).join(''));
document.querySelectorAll('[data-wins]').forEach((el, i) => el.innerHTML = [['Smanji', 'M3 8.500h9', ''], ['Povećaj', i ? 'M3.500 3.500h9v9h-9z' : 'M3.500 5.500h7v7h-7zM5.500 5V3.500h7v7H11', i ? 'opacity-25' : ''], ['Zatvori', 'm3 3 10 10M13 3 3 13', '']]
  .map(([l, d, c]) => `<button aria-label="${l}" class="flex w-[45px] justify-center ${c}"><svg class="size-4" viewBox="0 0 16 16" fill="none" stroke="currentColor"><path d="${d}"/></svg></button>`).join(''));

const tasks = [
  ['Pogled zadataka', '<path d="M0 8h16v14H0z" fill="#666"/><path d="M7 1h17v15H7z" fill="#f2f2f2"/><path d="M7 8h9v8H7z" fill="#aaa"/>'],
  ['Chat', '<path d="M12 1a11 11 0 1 1-6 20.500L1 23l1-6A11 11 0 0 1 12 1z" fill="url(#gChat)"/><path d="M6 8h8v8H6zM15 11l4-3v8l-4-3z" fill="#fff"/>'],
  ['Datoteke', '<path d="M0 2h9l2 3h13v5H0z" fill="#e0a010"/><path d="M0 5h24v17H0z" fill="#ffd04a"/><path d="M5 17q0-2 2-2h10q2 0 2 2v5H5z" fill="#1b78c8"/>'],
  ['Edge', '<circle cx="12" cy="12" r="11.500" fill="url(#gEdge)"/><path d="M12 9q-5 0-5 5 0 6 8 8 6-1 8-5-4 2-8 0-3-2-1-5 1-3-2-3z" fill="#0c4f94"/><path d="M13 10q3 2 1 5 1 2 5 2 3 0 4.500-2l.5 5-2 3q2-5-4-4-5-1-5-5z" fill="#1c1c1c"/>'],
  ['Trgovina', '<path d="M6 6V2h12v4" fill="none" stroke="#29b0ee" stroke-width="2"/><path d="M1 5h22v16q0 2-2 2H3q-2 0-2-2z" fill="#f4f4f4"/><path d="M7 9h4v4H7z" fill="#f04e23"/><path d="M12.500 9h4v4h-4z" fill="#7fba00"/><path d="M7 14.500h4v4H7z" fill="#00a4ef"/><path d="M12.500 14.500h4v4h-4z" fill="#ffb900"/>'],
  ['Naredbeni redak', '<path d="M1.500 3.500h21v17h-21z" fill="#000" stroke="#999"/><path d="M2 4h20v2H2z" fill="#ddd"/><path d="M6 8H4v3h2M8 8v1m0 1v1M10 8l1 3M13 11.500h5" stroke="#fff" fill="none"/>'],
  ['Chrome', '<circle cx="12" cy="12" r="11.500" fill="#e33b2e"/><path d="M2 6.200A11.500 11.500 0 0 0 11 23.500l5-9H12z" fill="#2da04e"/><path d="M22.500 7H12l4.500 8L11 23.500A11.500 11.500 0 0 0 22.500 7z" fill="#fccb2f"/><circle cx="12" cy="12" r="5.500" fill="#fff"/><circle cx="12" cy="12" r="4.300" fill="#3f7ff0"/>', 1],
  ['Postavke', '<circle cx="12" cy="12" r="9.500" fill="none" stroke="#78828c" stroke-width="4" stroke-dasharray="4.600 2.860"/><circle cx="12" cy="12" r="8" fill="#78828c"/><circle cx="12" cy="12" r="5.500" fill="#fff"/><circle cx="12" cy="12" r="4" fill="#1468b8"/>'],
  ['Udaljena radna površina', '<path d="M1 1h18v13H3z" fill="#d6dbe4"/><path d="M2 2h15v10H4z" fill="#1733d0"/><path d="M10 3h7v9z" fill="#7fa0ff"/><path d="M6 17h10l2 4H5z" fill="#ccc"/><circle cx="18" cy="18" r="5.500" fill="#d9e2d8"/><path d="m15 16 2.500 2-2.500 2M21 16l-2.500 2 2.500 2" stroke="#2a8a2a" fill="none"/>'],
  ['Blok za pisanje', '<path d="M3 2h18v21H3z" fill="#5cc8ea"/><path d="M3 21h18v2H3z" fill="#c86a28"/><path d="M3 1.500h18" stroke="#2a9cc8" stroke-width="3" stroke-dasharray="2 1"/><path d="M6 7.500h12M6 11.500h12M6 15.500h12" stroke="#1a6f98" stroke-width="1.500"/>'],
  ['VirtualBox', '<path d="M12 1 21 5v11l-9 7-9-7V5z" fill="#17386b" stroke="#e4ecf8" stroke-width="1.500"/><path d="M3 5l9 5 9-5M12 10v12" fill="none" stroke="#e4ecf8" stroke-width="2"/>'],
  ['Paint', '<path d="M12 1a11 11 0 1 0 0 22q2-1 1-5t4-4q6 0 6-4-1-8-11-9z" fill="#2fa8e6"/><circle cx="8" cy="7" r="2.200" fill="#e23"/><circle cx="14" cy="6" r="2.200" fill="#fc3"/><circle cx="5" cy="13" r="2.200" fill="#f72"/><circle cx="8" cy="18" r="2" fill="#2b4"/><path d="M18 8v8h1v7h2v-7h1V8z" fill="#d9a060"/>', 1],
  ['Navigator', '<circle cx="12" cy="12" r="11.500" fill="#3f86cc"/><circle cx="12" cy="12" r="8.500" fill="none" stroke="#cfe4f8" stroke-dasharray="2 2"/><path d="M12 1v22M1 12h22" stroke="#cfe4f8"/><circle cx="12" cy="12" r="5.500" fill="#f5a93a"/><path d="M12 9v4" stroke="#fff" stroke-width="1.500"/>', 1],
  ['Kalkulator', '<path d="M3 0h18v24H3z" fill="#5c6a78"/><path d="M5 2h14v5H5z" fill="#58d0f4"/><path d="M5 9h4v4H5zM10 9h4v4h-4zM15 9h4v4h-4zM5 14h4v4H5zM10 14h4v4h-4zM5 19h4v3H5zM10 19h4v3h-4z" fill="#dde"/><path d="M15 14h4v8h-4z" fill="#1468b8"/>'],
  ['Terminal', '<path d="M0 3h24v18H0z" fill="#3a3a3a"/><path d="M0 3h24v4H0z" fill="#888"/><path d="m5 10 4 3.500L5 17M12 17.500h6" stroke="#fff" stroke-width="1.800" fill="none"/>', 1],
  ['VS Code', '<path d="M17 1 6.500 11 2.500 8 0 9.500 3 12 0 14.500 2.500 16l4-3L17 23l6-2.500v-17zM17 7v10l-6.500-5z" fill="#1f8ad8"/><path d="m17 1 6 2.500v17L17 23z" fill="#3fb0f0"/>', 1],
  ['TeamViewer', '<path d="M1 0h22v24H1z" fill="#0a0f5c"/><circle cx="12" cy="12" r="9.500" fill="#fff"/><path d="M7 12h10M8.500 9 5.500 12l3 3M15.500 9l3 3-3 3" stroke="#0a0f5c" stroke-width="2" fill="none"/>', 1],
  ['AdriaKOD', '<circle cx="12" cy="12" r="12" fill="#fff"/><path d="M2 16 11 5h9L11 16z" fill="#6a63cf"/><path d="M13 10h8v7h-8z" fill="#ffe03a"/>', 2]
];
const cell = ['relative flex h-10 w-11 items-center justify-center', 'relative flex h-10 w-11 items-center justify-center', 'relative flex h-10 w-11 items-center justify-center rounded-md border border-[#3c3c3c] bg-[#2c2c2c]'];
const mark = ['', '<i class="absolute bottom-0 h-[3px] w-[6px] rounded-full bg-[#9a9a9a]"></i>', '<i class="absolute bottom-0 h-[3px] w-4 rounded-full bg-[#9fb0b8]"></i>'];
document.querySelector('[data-tasks]').innerHTML = tasks.map(([l, g, m = 0]) => `<button aria-label="${l}" class="${cell[m]}"><svg class="size-6" viewBox="0 0 24 24">${g}</svg>${mark[m]}</button>`).join('');

const works = `GN:PRIPREMNI RADOVI
GN-SK-IN:NASIPAVANJE I PLANIRANJE - RUČNO
GN-SK-IN:ZIDARSKI RADOVI - ZIDANJE
GN-SK-IN:TESARSKI RADOVI
GN:TERACERSKI RADOVI
GN-TU-SK:FASADERSKI RADOVI
GN-TU-SK:KERAMIČARSKI RADOVI
GN-TU-IN:SOBOSLIKARSKI RADOVI
GN-TU-IN:HIDROIZOLACIJE
GN:STAKLARSKI RADOVI
GN-TU:PODOPOLAGAČKI RADOVI
GN:LIMARSKI RADOVI
GN-SK:VODOVOD
GN:KANALIZACIJA
GN:SANITARIJE
GN:CENTRALNO GRIJANJE
GN:KLIMATIZACIJA
GN:ELEKTROINSTALACIJE
GN:GROMOBRAN I UZEMLJENJE
IN:MONTAŽNI RADOVI - KNAUF - SIPOREX PLOČE
GN:PRIJENOS MATERIJALA
GN-IN:KROVOPOKRIVAČKI RADOVI
GN-SK:ARMIRAČKI RADOVI - DOBAVA + UGRADBA + PRIJENOS
IN:RUŠENJA I DEMONTAŽE
GN:KAMENI KOLOVOZI
SK:ŠAHTE I KANALI
SK:PODNE PODLOGE I GLAZURE
TU:KAMENARSKI RADOVI
SK-IN:PRIJEVOZI
GN-SK-IN:BETONSKI RADOVI - DOBAVA + UGRADBA + PRIJENOS
GN-SK-IN:BETONSKI RADOVI - FAZE
GN-IN:ČIŠĆENJE
GN-SK-IN:SJEČENJE RASLINJA
GN-IN:MORTOVI
GN-SK-IN:ISKOPI - RUČNI
SK-IN:ISKOPI - STROJNI
GN-IN:BRAVARSKI RADOVI
IN:MATERIJALI ZAMJENSKI
GN-SK-IN:STROPOVI
GN-SK-IN:SKELA I PODUPIRANJE
GN-SK-IN:NASIPAVANJE I PLANIRANJE - STROJNO
IN:ISKOPI - KOMBINIRANI
IN:NASIPAVANJE I PLANIRANJE - KOMBINIRANO
GN-SK:ARMIRAČKI RADOVI - FAZE
IN:MATERIJALI U DRUGIM JEDINICAMA
GN-SK-IN:TERMOIZOLACIJE - DOBAVA + UGRADBA
GN-TU-IN:LIČILAČKI RADOVI
GN-SK-IN:ZIDARSKI RADOVI - ŽBUKANJE
GN-SK-IN:ŠTEMANJE - PROBIJANJE - BUŠENJE - BRUŠENJE
GN-SK-IN:ZIDARSKI RADOVI - UGRADBE`;
document.querySelector('[data-works]').innerHTML = works.split('\n').map((r, i) => {
  const [c, n] = r.split(':'); return `<tr class="${i ? 'h-[15px]' : 'h-[15px] bg-black text-white'}"><td class="pl-[2px]">${c}</td><td class="pl-[3px]">${n}</td></tr>`;
}).join('');
</script>
</body>
</html>
